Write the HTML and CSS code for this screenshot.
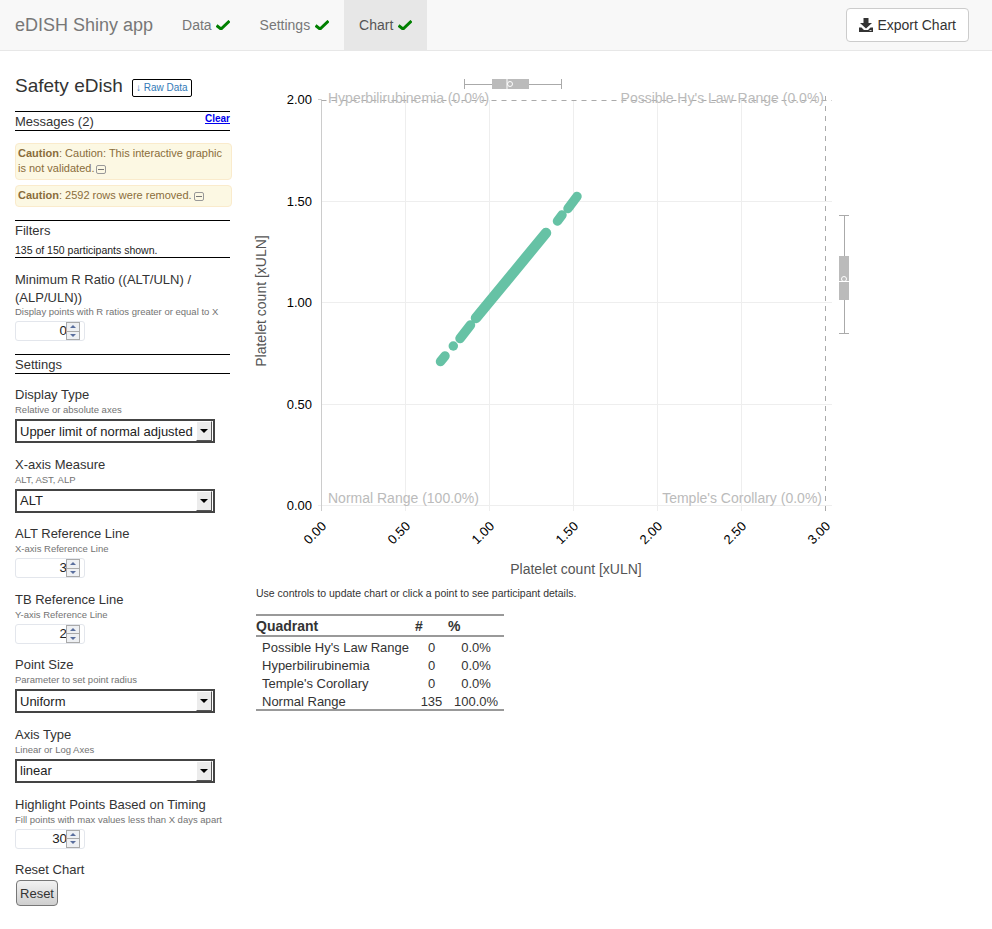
FILE: index.html
```html
<!DOCTYPE html>
<html lang="en">
<head>
    <meta charset="UTF-8">
    <meta name="viewport" content="width=device-width, initial-scale=1.0">
    <title>eDISH Shiny app</title>
    <link rel="stylesheet" href="styles.css">
</head>
<body>
    <nav class="navbar">
        <span class="brand">eDISH Shiny app</span>
        <a class="tab">Data <svg class="check" viewBox="0 0 14 10"><path d="M.5 5.500L5 9l8.500-8"/></svg></a>
        <a class="tab">Settings <svg class="check" viewBox="0 0 14 10"><path d="M.5 5.500L5 9l8.500-8"/></svg></a>
        <a class="tab active">Chart <svg class="check" viewBox="0 0 14 10"><path d="M.5 5.500L5 9l8.500-8"/></svg></a>
        <button class="export">
            <svg class="download" viewBox="0 0 14 14"><path d="M4.5 0h5v5H13L7 10.5 1 5h3.5z"/><path fill-rule="evenodd" d="M0 9.5h2.5L5 12h4l2.500-2.500H14V14H0zM10.500 12.200v.8h2v-.8z"/></svg>
            Export Chart
        </button>
    </nav>

    <div class="layout">
        <aside class="sidebar">
            <div class="title-row">
                <h3>Safety eDish</h3>
                <a class="raw-data">&#8595; Raw Data</a>
            </div>

            <div class="section-head messages-head">
                <span>Messages (2)</span>
                <a class="clear">Clear</a>
            </div>
            <div class="alert">
                <b>Caution</b><span>: Caution: This interactive graphic is not validated.</span><i class="collapse"></i>
            </div>
            <div class="alert">
                <b>Caution</b><span>: 2592 rows were removed.</span><i class="collapse"></i>
            </div>

            <div class="section-head filters-head">
                <span>Filters</span>
                <small>135 of 150 participants shown.</small>
            </div>

            <div class="field first">
                <label class="two-line">Minimum R Ratio ((ALT/ULN) / (ALP/ULN))</label>
                <p class="help">Display points with R ratios greater or equal to X</p>
                <div class="num"><span class="num-value">0</span><span class="spin"><i class="up"></i><i class="down"></i></span></div>
            </div>

            <div class="section-head settings-head"><span>Settings</span></div>

            <div class="field first">
                <label>Display Type</label>
                <p class="help">Relative or absolute axes</p>
                <div class="select"><span>Upper limit of normal adjusted</span><i class="select-btn"></i></div>
            </div>
            <div class="field">
                <label>X-axis Measure</label>
                <p class="help">ALT, AST, ALP</p>
                <div class="select"><span>ALT</span><i class="select-btn"></i></div>
            </div>
            <div class="field">
                <label>ALT Reference Line</label>
                <p class="help">X-axis Reference Line</p>
                <div class="num"><span class="num-value">3</span><span class="spin"><i class="up"></i><i class="down"></i></span></div>
            </div>
            <div class="field">
                <label>TB Reference Line</label>
                <p class="help">Y-axis Reference Line</p>
                <div class="num"><span class="num-value">2</span><span class="spin"><i class="up"></i><i class="down"></i></span></div>
            </div>
            <div class="field">
                <label>Point Size</label>
                <p class="help">Parameter to set point radius</p>
                <div class="select"><span>Uniform</span><i class="select-btn"></i></div>
            </div>
            <div class="field">
                <label>Axis Type</label>
                <p class="help">Linear or Log Axes</p>
                <div class="select"><span>linear</span><i class="select-btn"></i></div>
            </div>
            <div class="field">
                <label>Highlight Points Based on Timing</label>
                <p class="help">Fill points with max values less than X days apart</p>
                <div class="num"><span class="num-value">30</span><span class="spin"><i class="up"></i><i class="down"></i></span></div>
            </div>
            <div class="field">
                <label>Reset Chart</label>
                <button class="reset">Reset</button>
            </div>
        </aside>

        <main class="main">
            <!-- viewBox uses page coordinates so the numbers read off the screenshot directly -->
            <svg class="chart" viewBox="245 70 615 510">
                <g class="grid">
                    <path d="M321.500 201.500H832M321.500 302.500H832M321.500 404.500H832M318 505.500H832"/>
                    <path d="M405.500 100V511M489.500 100V511M573.500 100V511M657.500 100V511M741.500 100V511"/>
                </g>
                <path class="axis" d="M318 99.500H321.500M321.500 99.500V511"/>
                <path class="ref" d="M321.500 100.500H832M825.500 96V511"/>

                <text class="quad" x="328" y="103">Hyperbilirubinemia (0.0%)</text>
                <text class="quad end" x="824" y="103">Possible Hy's Law Range (0.0%)</text>
                <text class="quad" x="328" y="503">Normal Range (100.0%)</text>
                <text class="quad end" x="822" y="503">Temple's Corollary (0.0%)</text>

                <g class="ticks end">
                    <text x="312" y="104">2.00</text>
                    <text x="312" y="206">1.50</text>
                    <text x="312" y="307">1.00</text>
                    <text x="312" y="409">0.50</text>
                    <text x="312" y="510">0.00</text>
                </g>
                <g class="ticks end">
                    <text x="327" y="527" transform="rotate(-45 327 527)">0.00</text>
                    <text x="411" y="527" transform="rotate(-45 411 527)">0.50</text>
                    <text x="495" y="527" transform="rotate(-45 495 527)">1.00</text>
                    <text x="579" y="527" transform="rotate(-45 579 527)">1.50</text>
                    <text x="663" y="527" transform="rotate(-45 663 527)">2.00</text>
                    <text x="747" y="527" transform="rotate(-45 747 527)">2.50</text>
                    <text x="831" y="527" transform="rotate(-45 831 527)">3.00</text>
                </g>

                <text class="axis-label" x="576" y="574">Platelet count [xULN]</text>
                <text class="axis-label" x="266" y="301" transform="rotate(-90 266 301)">Platelet count [xULN]</text>

                <g class="points">
                    <path d="M440.500 361.500L445 356"/>
                    <path d="M453.300 346V346"/>
                    <path d="M460 338.500L470.500 325"/>
                    <path class="dense" d="M476 318L546 233"/>
                    <path d="M557.500 221L562 215"/>
                    <path d="M568 208.500L577 196.500"/>
                </g>

                <g class="box">
                    <path class="whisker" d="M464.500 79V89M561.500 79V89M464.500 84.500H561.500"/>
                    <rect x="492" y="79" width="37" height="10"/>
                    <path class="median" d="M507 79V89"/>
                    <circle class="mean" cx="510" cy="84" r="2.500"/>
                </g>
                <g class="box">
                    <path class="whisker" d="M839 215.500H849M839 333.500H849M844.500 215.500V333.500"/>
                    <rect x="839" y="256" width="10" height="44"/>
                    <path class="median" d="M839 281.500H849"/>
                    <circle class="mean" cx="844" cy="279" r="2.500"/>
                </g>
            </svg>

            <p class="note">Use controls to update chart or click a point to see participant details.</p>

            <table class="quadrants">
                <thead>
                    <tr><th>Quadrant</th><th>#</th><th>%</th></tr>
                </thead>
                <tbody>
                    <tr><td>Possible Hy's Law Range</td><td>0</td><td>0.0%</td></tr>
                    <tr><td>Hyperbilirubinemia</td><td>0</td><td>0.0%</td></tr>
                    <tr><td>Temple's Corollary</td><td>0</td><td>0.0%</td></tr>
                    <tr><td>Normal Range</td><td>135</td><td>100.0%</td></tr>
                </tbody>
            </table>
        </main>
    </div>
</body>
</html>
```

FILE: styles.css
```css
* {
    box-sizing: border-box;
}
body {
    margin: 0;
    font-family: "Liberation Sans", Arial, sans-serif;
    font-size: 14px;
    color: #333;
    background: #fff;
}

/* navbar */
.navbar {
    display: flex;
    align-items: stretch;
    height: 51px;
    padding-left: 15px;
    background: #f8f8f8;
    border-bottom: 1px solid #e7e7e7;
}
.brand {
    font-size: 18px;
    line-height: 50px;
    color: #777;
    margin-right: 14px;
}
.tab {
    padding: 0 15px;
    line-height: 50px;
    color: #777;
}
.tab + .tab .check {
    margin-left: 1px;
}
.tab.active {
    background: #e7e7e7;
    color: #555;
}
.check {
    width: 14px;
    height: 10px;
}
.check path {
    fill: none;
    stroke: #008000;
    stroke-width: 3;
}
.export {
    display: flex;
    align-items: center;
    gap: 4px;
    height: 34px;
    margin: 8px 23px 0 auto;
    padding: 0 12px;
    background: #fff;
    border: 1px solid #ccc;
    border-radius: 4px;
    font: inherit;
    color: #333;
}
.download {
    width: 14px;
    height: 14px;
    fill: #333;
}

.layout {
    display: flex;
}

/* sidebar */
.sidebar {
    width: 245px;
    padding: 0 15px;
    font-size: 13px;
}
.title-row {
    display: flex;
    align-items: center;
    gap: 9px;
    height: 60px;
    padding-top: 9px;
}
.title-row h3 {
    margin: 0;
    font-size: 19px;
    font-weight: normal;
}
.raw-data {
    width: 60px;
    height: 18px;
    margin-top: 4px;
    border: 1px solid #000;
    border-radius: 2px;
    font-size: 10px;
    line-height: 16px;
    text-align: center;
    color: #337ab7;
}
.section-head {
    border-top: 1px solid #000;
    border-bottom: 1px solid #000;
    line-height: 19px;
}
.messages-head {
    display: flex;
    justify-content: space-between;
    height: 20px;
    margin-bottom: 12px;
}
.clear {
    font-size: 10px;
    font-weight: bold;
    line-height: 14px;
    color: #00e;
    text-decoration: underline;
}
.alert {
    width: 217px;
    margin-bottom: 5px;
    padding: 2px 2px 3px;
    background: #fcf8e3;
    border: 1px solid #faebcc;
    border-radius: 4px;
    font-size: 11px;
    line-height: 15px;
    color: #8a6d3b;
}
.collapse {
    display: inline-block;
    width: 10px;
    height: 9px;
    margin-left: 2px;
    vertical-align: -2px;
    border: 1px solid #999;
    border-radius: 2px;
    background: linear-gradient(#777, #777) center / 6px 1px no-repeat;
}
.filters-head {
    margin-top: 13px;
    height: 38px;
}
.filters-head span,
.filters-head small {
    display: block;
}
.filters-head small {
    margin-top: 3px;
    font-size: 10.5px;
    line-height: 14px;
    color: #222;
}
.settings-head {
    margin-top: 13px;
    height: 20px;
}

.field {
    margin-top: 13.6px;
}
.field.first {
    margin-top: 13px;
}
.field label {
    display: block;
    line-height: 16px;
}
.field .two-line {
    margin-bottom: -2px;
    line-height: 18px;
}
.help {
    margin: 1px 0 0;
    font-size: 9.5px;
    line-height: 12px;
    color: #737373;
}

/* number inputs */
.num {
    display: flex;
    align-items: center;
    justify-content: flex-end;
    width: 70px;
    height: 20px;
    margin-top: 3px;
    padding: 0 4px 0 0;
    background: #fff;
    border: 1px solid #e3e6ec;
    border-radius: 3px;
}
.num-value {
    width: 40px;
    height: 16px;
    overflow: hidden;
    direction: rtl;
    font-size: 13.33px;
    line-height: 16px;
    margin-right: -1px;
    color: #222;
}
.spin {
    display: flex;
    flex-direction: column;
    width: 14px;
    height: 18px;
    border: 1px solid #aaa;
    background: #eef0f3;
    position: relative;
    z-index: 1;
}
.spin i {
    flex: 1;
    display: flex;
    align-items: center;
    justify-content: center;
}
.spin .up {
    border-bottom: 1px solid #aaa;
}
.spin .up::after,
.spin .down::after {
    content: "";
    border-left: 3px solid transparent;
    border-right: 3px solid transparent;
}
.spin .up::after {
    border-bottom: 3px solid #5a6f9e;
}
.spin .down::after {
    border-top: 3px solid #5a6f9e;
}

/* selects */
.select {
    display: flex;
    align-items: center;
    justify-content: space-between;
    width: 200px;
    height: 24px;
    margin-top: 3px;
    padding: 0 1px 0 3px;
    border: 2px solid #444;
    background: #fff;
    font-size: 13px;
    white-space: nowrap;
    color: #222;
}
.select-btn {
    display: flex;
    align-items: center;
    justify-content: center;
    width: 16px;
    height: 20px;
    background: #ececec;
    border-top: 1px solid #fff;
    border-left: 1px solid #fff;
    border-right: 1px solid #555;
    border-bottom: 1px solid #555;
}
.select-btn::after {
    content: "";
    border-left: 4px solid transparent;
    border-right: 4px solid transparent;
    border-top: 4px solid #000;
}
.reset {
    display: block;
    width: 42px;
    height: 26px;
    margin: 2px 0 0 1px;
    padding: 0;
    background: linear-gradient(#f2f2f2, #cfcfcf);
    border: 1px solid #777;
    border-radius: 4px;
    font: inherit;
    font-size: 13px;
    color: #333;
}

/* chart area */
.main {
    flex: 1;
    padding-top: 19px;
}
.chart {
    display: block;
    width: 615px;
    height: 510px;
}
.chart text {
    font-family: "Liberation Sans", Arial, sans-serif;
}
.grid path {
    fill: none;
    stroke: #eee;
}
.axis {
    fill: none;
    stroke: #ccc;
}
.ref {
    fill: none;
    stroke: #aaa;
    stroke-dasharray: 5 5;
}
.quad {
    font-size: 14px;
    fill: #bbb;
}
.end {
    text-anchor: end;
}
.ticks text {
    font-size: 13px;
    fill: #000;
}
.axis-label {
    font-size: 14px;
    fill: #555;
    text-anchor: middle;
}
.points path {
    fill: none;
    stroke: #66c2a5;
    stroke-width: 9.500;
    stroke-linecap: round;
}
.points .dense {
    stroke-width: 10.500;
}
.whisker {
    fill: none;
    stroke: #aaa;
}
.box rect {
    fill: #bbb;
}
.median {
    stroke: #fff;
}
.mean {
    fill: none;
    stroke: #fff;
}

.note {
    margin: 6px 0 0 11px;
    font-size: 10.5px;
    line-height: 14px;
    color: #333;
}
.quadrants {
    width: 248px;
    margin: 14px 0 0 11px;
    border-collapse: collapse;
    border-top: 2px solid #999;
    border-bottom: 2px solid #999;
    font-size: 13px;
    color: #333;
}
.quadrants th {
    padding: 0;
    height: 21px;
    border-bottom: 2px solid #999;
    font-size: 14px;
    text-align: left;
}
.quadrants td {
    height: 18px;
    padding: 4px 0 0;
    line-height: 14px;
    text-align: center;
    white-space: nowrap;
}
.quadrants td:first-child {
    padding-left: 6px;
    text-align: left;
    width: 159px;
}
.quadrants td:nth-child(2) {
    width: 33px;
}
.quadrants td:last-child {
    width: 56px;
}
```
